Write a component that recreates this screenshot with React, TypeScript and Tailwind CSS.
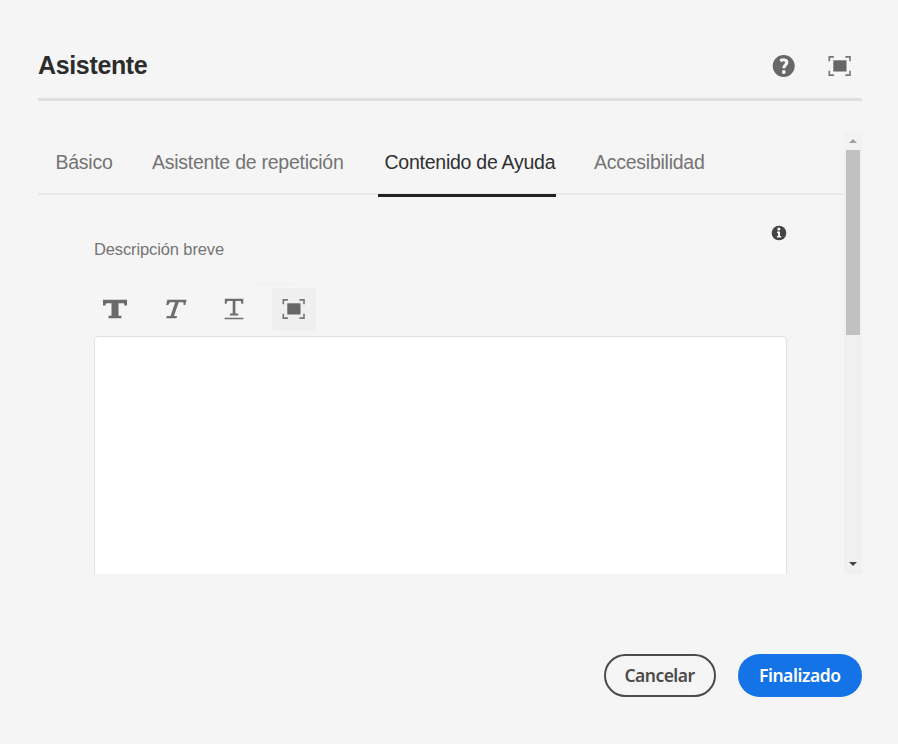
import type { ReactNode } from 'react';

const tabs = [
  { label: 'Básico', box: 'ml-[17.5px] w-[57.5px]' },
  { label: 'Asistente de repetición', box: 'ml-[39px] w-[193px]' },
  { label: 'Contenido de Ayuda', box: 'ml-[33px] w-[177.5px] pl-[6.5px]', active: true },
  { label: 'Accesibilidad', box: 'ml-[38.5px] w-[112px]' },
];

function FullScreenIcon() {
  return (
    <svg width="24" height="22" viewBox="0 0 24 22" className="block">
      <rect x="5.3" y="5.3" width="13.2" height="11.2" fill="#666" />
      <path d="M1.3 6.2V1.9H5.9M17.4 1.9H22V6.2M22 15.8V20.1H17.4M5.9 20.1H1.3V15.8" fill="none" stroke="#757575" strokeWidth="1.6" />
    </svg>
  );
}

function HelpIcon() {
  return (
    <svg width="24" height="24" viewBox="0 0 24 24" className="block">
      <circle cx="11.7" cy="12" r="11" fill="#676767" />
      <path d="M8.3 6.9C11 5.1 14.8 5.5 14.8 8.5C14.8 11 11.9 11 11.9 14.2" fill="none" stroke="#f5f5f5" strokeWidth="3.1" />
      <circle cx="11.8" cy="18" r="1.9" fill="#f5f5f5" />
    </svg>
  );
}

function InfoIcon() {
  return (
    <svg width="16" height="16" viewBox="0 0 16 16" className="block">
      <circle cx="8" cy="8" r="7.3" fill="#454545" />
      <circle cx="7.9" cy="4.1" r="1.5" fill="#f5f5f5" />
      <path d="M6 6.6H9V11H10.2V12.4H5.9V11H7V8H6Z" fill="#f5f5f5" />
    </svg>
  );
}

function Tool({ children, className }: { children: ReactNode; className: string }) {
  return <button className={`flex h-[43px] items-center justify-center rounded-[4px] ${className}`}>{children}</button>;
}

function Toolbar() {
  return (
    <div className="flex h-[43px]">
      <Tool className="w-[42px]">
        <svg width="24" height="20" viewBox="0 0 24 20">
          <path d="M0 .8H24V6.5H21.7L20.8 4.2H15.5V16.7H18.4V19.3H5.5V16.7H8.5V4.2H3.2L2.3 6.5H0Z" fill="#6b6b6b" />
        </svg>
      </Tool>
      <Tool className="ml-[18.5px] w-[43px]">
        <svg width="22" height="20" viewBox="0 0 22 20">
          <path d="M2.3.8H21.6L20.3 6H18.6L18.4 3.2H13.7L9 17H12L11.5 19.3H1.2L1.8 17H5.5L10.2 3.2H5L3.2 6H1.2Z" fill="#6e6e6e" />
        </svg>
      </Tool>
      <Tool className="ml-[15.5px] w-[43px]">
        <svg width="20" height="22" viewBox="0 0 20 22">
          <path d="M.8.8H19.3V5.8H17.5L16.8 3H11.4V15.4H14.2V17.6H5.9V15.4H8.7V3H3.3L2.6 5.8H.8ZM.6 19.8H19.4V21.3H.6Z" fill="#6e6e6e" />
        </svg>
      </Tool>
      <Tool className="ml-[16.5px] w-[43.5px] bg-[#efefef]"><FullScreenIcon /></Tool>
    </div>
  );
}

function Scrollbar() {
  return (
    <div className="flex h-[442px] w-[18px] shrink-0 flex-col items-center bg-[#f0f0f0]">
      <div className="flex h-[18px] w-full items-center justify-center bg-[#f2f2f2]">
        <svg width="8" height="4" viewBox="0 0 8 4"><path d="M0 4L4 0L8 4Z" fill="#a0a0a0" /></svg>
      </div>
      <div className="h-[185px] w-[14px] bg-[#c1c1c1]" />
      <div className="mt-auto flex h-[20px] items-center">
        <svg width="8" height="4" viewBox="0 0 8 4"><path d="M0 0H8L4 4Z" fill="#444" /></svg>
      </div>
    </div>
  );
}

export default function App() {
  return (
    <div className="h-[744px] w-[898px] overflow-hidden bg-[#f5f5f5] pl-[38px] pr-[36px] font-['Liberation_Sans',Arial,sans-serif]">
      <header className="flex h-[101px] items-end justify-between border-b-[3px] border-[#dfdfdf]">
        <h1 className="mb-[18px] text-[25px] font-bold leading-[30px] tracking-[-0.35px] text-[#2c2c2c]">Asistente</h1>
        <div className="mb-[20px] mr-[10.5px] flex items-center gap-[32px]">
          <HelpIcon />
          <FullScreenIcon />
        </div>
      </header>
      <main className="mt-[31px] flex h-[442px] overflow-hidden">
        <section className="flex w-[806px] flex-col">
          <nav className="flex h-[63px] shrink-0 border-b-2 border-[#e8e8e8]">
            {tabs.map((tab) => (
              <button
                key={tab.label}
                className={`flex h-[65px] shrink-0 border-b-[3px] pt-[18px] text-left text-[19.5px] leading-[24px] tracking-[-0.25px] whitespace-nowrap ${tab.box} ${tab.active ? 'border-[#202020] text-[#303030]' : 'border-transparent text-[#747474]'}`}
              >
                {tab.label}
              </button>
            ))}
          </nav>
          <div className="flex grow flex-col pl-[55.5px] pr-[57px]">
            <div className="flex h-[88px] justify-between">
              <label className="pl-[0.5px] pt-[44px] text-[16.5px] leading-[20px] tracking-[-0.12px] text-[#747474]">Descripción breve</label>
              <div className="pt-[30px]"><InfoIcon /></div>
            </div>
            <div className="ml-[157px] h-px w-[43px] bg-[#efefef]" />
            <div className="mt-[3.5px]"><Toolbar /></div>
            <div className="mt-[5.5px] w-[693.5px] grow rounded-t-[5px] border border-b-0 border-[#e0e0e0] bg-white" />
          </div>
        </section>
        <Scrollbar />
      </main>
      <footer className="mt-[80px] flex justify-end gap-[22px] font-['Noto_Sans',sans-serif] text-[17.5px] font-semibold">
        <button className="h-[43px] w-[112px] rounded-full border-2 border-[#4b4b4b] tracking-[-0.55px] text-[#4b4b4b]">Cancelar</button>
        <button className="h-[43px] w-[124.5px] rounded-full bg-[#1473e6] tracking-[-0.45px] text-white">Finalizado</button>
      </footer>
    </div>
  );
}
